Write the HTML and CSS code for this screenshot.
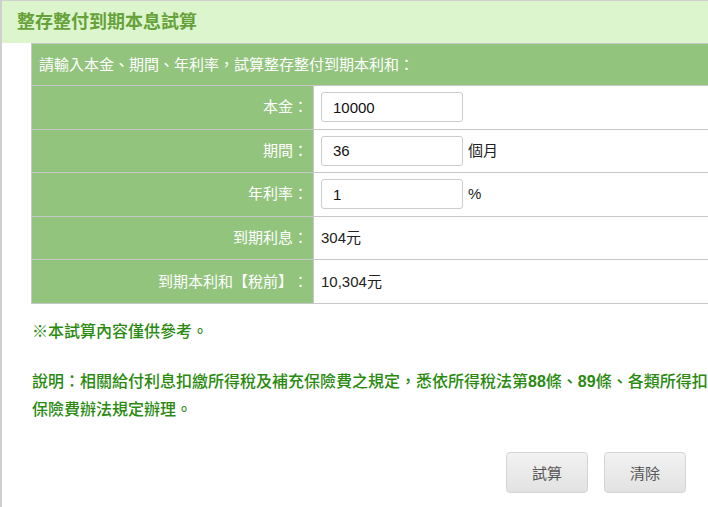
FILE: index.html
```html
<!DOCTYPE html>
<html lang="zh-Hant">
<head>
    <meta charset="UTF-8">
    <meta name="viewport" content="width=device-width, initial-scale=1.0">
    <title>整存整付到期本息試算</title>
    <link rel="stylesheet" href="styles.css">
</head>
<body>
    <div class="calc">
        <h2 class="calc-title">整存整付到期本息試算</h2>

        <table class="calc-table">
            <tr>
                <th colspan="2" class="calc-head">請輸入本金、期間、年利率，試算整存整付到期本利和：</th>
            </tr>
            <tr>
                <td class="label">本金：</td>
                <td class="value"><input type="text" class="field" value="10000"></td>
            </tr>
            <tr>
                <td class="label">期間：</td>
                <td class="value"><input type="text" class="field" value="36"><span class="unit">個月</span></td>
            </tr>
            <tr>
                <td class="label">年利率：</td>
                <td class="value"><input type="text" class="field" value="1"><span class="unit">%</span></td>
            </tr>
            <tr>
                <td class="label">到期利息：</td>
                <td class="value">304元</td>
            </tr>
            <tr>
                <td class="label">到期本利和【稅前】：</td>
                <td class="value">10,304元</td>
            </tr>
        </table>

        <p class="note">※本試算內容僅供參考。</p>
        <p class="note desc">說明：相關給付利息扣繳所得稅及補充保險費之規定，悉依所得稅法第<b>88</b>條、<b>89</b>條、各類所得扣繳率標準及全民健康<br>保險費辦法規定辦理。</p>

        <div class="actions">
            <button class="btn">試算</button>
            <button class="btn">清除</button>
        </div>
    </div>
</body>
</html>
```

FILE: styles.css
```css
html, body {
    margin: 0;
    overflow: hidden;
}

body {
    font-family: "Liberation Sans", "Noto Sans CJK TC", sans-serif;
    font-size: 15px;
    color: #222;
    background: #fff;
    text-spacing-trim: space-all;
}

.calc {
    width: 900px;
    min-height: 100vh;
    border-left: 2px solid #cfcfcf;
    border-top: 1px solid #cfcfcf;
}

/* 상단 제목 띠 */
.calc-title {
    margin: 0;
    height: 42px;
    line-height: 42px;
    padding-left: 15px;
    font-size: 18px;
    font-weight: bold;
    color: #66a23a;
    background-color: #ddf5cd;
}

.calc-table {
    margin-left: 29px;
    width: 860px;
    border-collapse: collapse;
}

.calc-table th,
.calc-table td {
    border: 1px solid #c8c8c8;
    height: 42.6px;
    padding: 0;
    line-height: 20px;
}

.calc-table th {
    height: 41px;
}

.calc-head {
    text-align: left;
    font-weight: normal;
    color: #fff;
    background-color: #93c47d;
    padding-left: 7px !important;
}

.label {
    width: 276px;
    text-align: right;
    color: #fff;
    background-color: #93c47d;
    padding-right: 5px !important;
}

.value {
    padding-left: 7px !important;
    color: #222;
}

.field {
    width: 142px;
    height: 30px;
    box-sizing: border-box;
    border: 1px solid #cccccc;
    border-radius: 3px;
    padding: 0 11px;
    font-family: "Liberation Sans", sans-serif;
    font-size: 15px;
    color: #111;
    vertical-align: middle;
}

.unit {
    margin-left: 5px;
    vertical-align: middle;
}

.note {
    margin: 14px 0 0 30px;
    line-height: 28px;
    font-size: 16px;
    font-weight: 500;
    color: #2a8a10;
    white-space: nowrap;
}

.note b {
    font-weight: bold;
}

.desc {
    margin-top: 22px;
}

.actions {
    width: 706px;
    display: flex;
    justify-content: flex-end;
    gap: 16px;
    margin-top: 28px;
    padding-right: 22px;
    box-sizing: border-box;
}

.btn {
    width: 82px;
    height: 41px;
    border: 1px solid #d4d4d4;
    border-radius: 4px;
    background: linear-gradient(#f2f2f2, #e2e2e2);
    font-family: "Noto Sans CJK TC", sans-serif;
    font-size: 15px;
    color: #555;
}
```
